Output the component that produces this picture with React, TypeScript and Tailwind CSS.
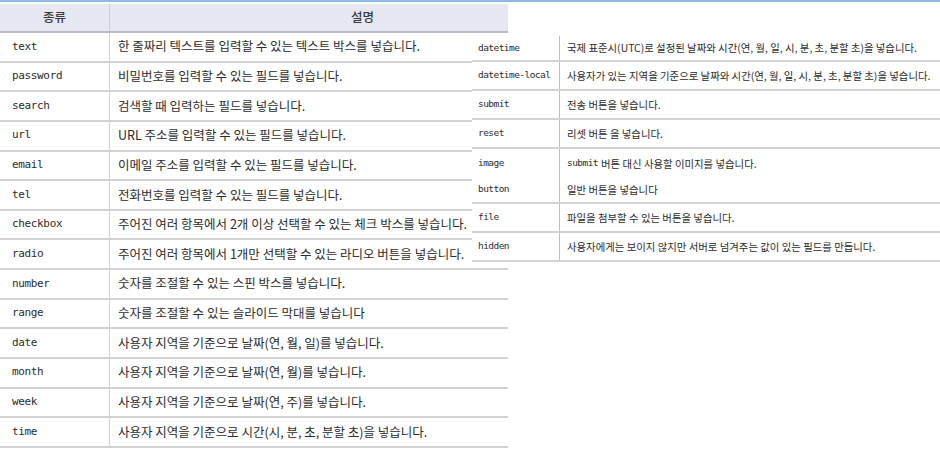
import React from "react";

const leftRows: [string, string][] = [
  ["text", "한 줄짜리 텍스트를 입력할 수 있는 텍스트 박스를 넣습니다."],
  ["password", "비밀번호를 입력할 수 있는 필드를 넣습니다."],
  ["search", "검색할 때 입력하는 필드를 넣습니다."],
  ["url", "URL 주소를 입력할 수 있는 필드를 넣습니다."],
  ["email", "이메일 주소를 입력할 수 있는 필드를 넣습니다."],
  ["tel", "전화번호를 입력할 수 있는 필드를 넣습니다."],
  ["checkbox", "주어진 여러 항목에서 2개 이상 선택할 수 있는 체크 박스를 넣습니다."],
  ["radio", "주어진 여러 항목에서 1개만 선택할 수 있는 라디오 버튼을 넣습니다."],
  ["number", "숫자를 조절할 수 있는 스핀 박스를 넣습니다."],
  ["range", "숫자를 조절할 수 있는 슬라이드 막대를 넣습니다"],
  ["date", "사용자 지역을 기준으로 날짜(연, 월, 일)를 넣습니다."],
  ["month", "사용자 지역을 기준으로 날짜(연, 월)를 넣습니다."],
  ["week", "사용자 지역을 기준으로 날짜(연, 주)를 넣습니다."],
  ["time", "사용자 지역을 기준으로 시간(시, 분, 초, 분할 초)을 넣습니다."],
];

const KO = "font-['Noto_Sans_CJK_KR',sans-serif]";
const MONO = "font-['DejaVu_Sans_Mono',monospace]";

function RightRow({ name, desc, first }: { name: string; desc: React.ReactNode; first?: boolean }) {
  return (
    <div className={"flex border-b-2 border-[#d2d2d2] " + (first ? "h-[29px] pt-[3px]" : "h-[29px]")}>
      <div className={`w-[88px] shrink-0 border-r border-[#bdbdbd] pl-[6px] flex items-center text-[9.5px] tracking-[-0.55px] text-[#2b2b2b] ${MONO}`}>
        {name}
      </div>
      <div className={`flex-1 pl-[7px] flex items-center whitespace-nowrap text-[10.4px] text-[#2b2b2b] ${KO}`}>{desc}</div>
    </div>
  );
}

export default function App() {
  return (
    <div className="relative w-[940px] h-[450px] bg-white overflow-hidden">
      <div className="h-[2px] bg-[#8fb9e4]" />
      <div className="mt-[2px] w-[508px]">
        <div className="flex h-[29px] bg-[#e5e7f1] border-b-2 border-[#b8b9c2]">
          <div className={`w-[110px] shrink-0 border-r border-[#cbccd6] flex items-center justify-center text-[12.5px] font-medium text-[#3a3a3a] ${KO}`}>
            종류
          </div>
          <div className={`flex-1 pl-[241px] flex items-center text-[12.5px] font-medium text-[#3a3a3a] ${KO}`}>설명</div>
        </div>
        {leftRows.map(([name, desc]) => (
          <div key={name} className="flex h-[29.64px] border-b-2 border-[#d2d2d2]">
            <div className={`w-[110px] shrink-0 border-r border-[#d0d0d0] pl-[12px] flex items-center text-[11px] tracking-[-0.35px] text-[#2b2b2b] ${MONO}`}>
              {name}
            </div>
            <div className={`pl-[8px] flex items-center whitespace-nowrap text-[12.5px] text-[#2b2b2b] ${KO}`}>{desc}</div>
          </div>
        ))}
      </div>

      <div className="absolute left-[472px] top-[33px] w-[468px] bg-white">
        <RightRow first name="datetime" desc="국제 표준시(UTC)로 설정된 날짜와 시간(연, 월, 일, 시, 분, 초, 분할 초)을 넣습니다." />
        <RightRow name="datetime-local" desc="사용자가 있는 지역을 기준으로 날짜와 시간(연, 월, 일, 시, 분, 초, 분할 초)을 넣습니다." />
        <RightRow name="submit" desc="전송 버튼을 넣습니다." />
        <RightRow name="reset" desc="리셋 버튼 을 넣습니다." />
        <div className="flex h-[55px] border-b-2 border-[#d2d2d2]">
          <div className={`w-[88px] shrink-0 border-r border-[#bdbdbd] pl-[6px] flex flex-col text-[9.5px] tracking-[-0.55px] text-[#2b2b2b] ${MONO}`}>
            <div className="h-[28px] pt-[1px] flex items-center">image</div>
            <div className="h-[25px] flex items-center">button</div>
          </div>
          <div className={`flex-1 pl-[7px] flex flex-col whitespace-nowrap text-[10.4px] text-[#2b2b2b] ${KO}`}>
            <div className="h-[28px] pt-[1px] flex items-center">
              <span className={`${MONO} text-[9.5px] tracking-[-0.55px] mr-[3px]`}>submit</span>버튼 대신 사용할 이미지를 넣습니다.
            </div>
            <div className="h-[25px] flex items-center">일반 버튼을 넣습니다</div>
          </div>
        </div>
        <RightRow name="file" desc="파일을 첨부할 수 있는 버튼을 넣습니다." />
        <RightRow name="hidden" desc="사용자에게는 보이지 않지만 서버로 넘겨주는 값이 있는 필드를 만듭니다." />
      </div>
    </div>
  );
}
